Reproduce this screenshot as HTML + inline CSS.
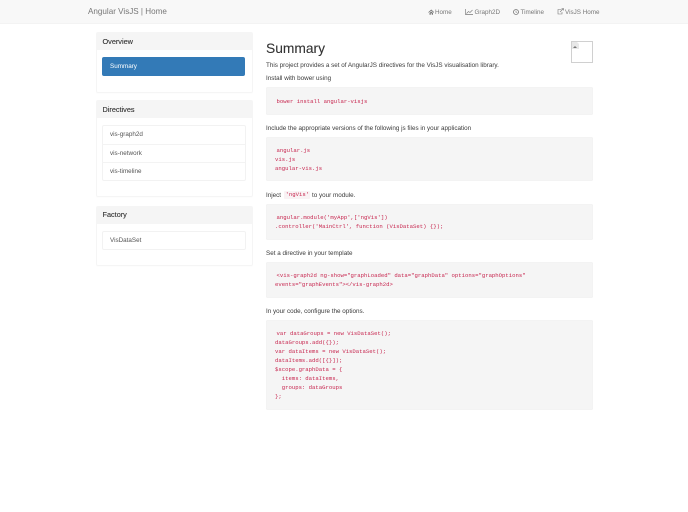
<!DOCTYPE html>
<html><head><meta charset="utf-8"><title>Angular VisJS</title>
<style>
html,body{margin:0;padding:0;background:#fff}
#r{position:relative;width:688px;height:512px;overflow:hidden;font-family:"Liberation Sans",sans-serif;color:#3a3a3a;font-size:6.3px;filter:blur(.28px)}
#r div,#r svg{position:absolute}
.t{white-space:pre;line-height:10px;height:10px}
.n{color:#777;font-size:6.3px;top:7.500px}
.p{left:96px;width:155px;background:#fff;border:1px solid #f5f5f5;border-radius:2px;box-shadow:0 1px 1px rgba(0,0,0,.012);box-sizing:content-box}
.h{background:#f5f5f5}
.l{left:102px;width:142px;background:#fff;border:1px solid #f2f2f2;border-radius:2px;box-sizing:content-box}
.s{left:102px;width:143px;height:1px;background:#f3f3f3}
.b{font-size:7.3px;left:102.5px;color:#333;-webkit-text-stroke:.12px #333}
.pre{left:266px;width:326.5px;background:#f5f5f5;border-radius:2px;box-shadow:inset 0 0 0 .5px #f1f1f1}
.c{font-family:"Liberation Mono",monospace;font-size:5.62px;color:#c7254e;white-space:pre;line-height:9px;height:9px}
</style></head><body><div id="r">
<div style="left:0;top:0;width:688px;height:23px;background:#f8f8f8;border-bottom:1px solid #f3f3f3"></div>
<div class="t" style="left:88px;top:7px;font-size:8.1px;color:#777">Angular VisJS | Home</div>

<svg style="left:427.500px;top:8.500px" width="6.500" height="6" viewBox="0 0 12 12"><path d="M0 6.500 6 1l6 5.500-1 1L6 3.500 1 7.500zM2.500 8 6 5l3.500 3v3.500H7V8.500H5v3H2.500z" fill="#777"/></svg>
<div class="t n" style="left:435px">Home</div>
<svg style="left:465px;top:8.500px" width="8" height="6" viewBox="0 0 16 12"><path d="M1 0v11h15M3 9l4-4 3 2 5-5" fill="none" stroke="#777" stroke-width="1.300"/></svg>
<div class="t n" style="left:474.500px">Graph2D</div>
<svg style="left:513px;top:8.500px" width="6" height="6" viewBox="0 0 12 12"><circle cx="6" cy="6" r="5" fill="none" stroke="#777" stroke-width="1.600"/><path d="M6 3v3.500h2.500" fill="none" stroke="#777" stroke-width="1.200"/></svg>
<div class="t n" style="left:520.500px">Timeline</div>
<svg style="left:557px;top:8px" width="7" height="7" viewBox="0 0 14 14"><path d="M9 3H2v9h8V8M6 8l7-7M9 1h4v4" fill="none" stroke="#777" stroke-width="1.200"/></svg>
<div class="t n" style="left:565px">VisJS Home</div>

<div class="p" style="top:32px;height:58.500px"></div>
<div class="h" style="left:96.500px;top:32.500px;width:155.500px;height:17.500px"></div>
<div class="t b" style="top:36.500px">Overview</div>
<div style="left:102px;top:57px;width:143px;height:18.500px;background:#337ab7;border-radius:2px"></div>
<div class="t" style="left:110px;top:62px;color:#fff">Summary</div>

<div class="p" style="top:100px;height:95px"></div>
<div class="h" style="left:96.500px;top:100.500px;width:155.500px;height:17.500px"></div>
<div class="t b" style="top:104.500px">Directives</div>
<div class="l" style="top:125px;height:54px"></div>
<div class="s" style="top:143.500px"></div>
<div class="s" style="top:162px"></div>
<div class="t" style="left:110px;top:130px;color:#555">vis-graph2d</div>
<div class="t" style="left:110px;top:148.500px;color:#555">vis-network</div>
<div class="t" style="left:110px;top:167px;color:#555">vis-timeline</div>

<div class="p" style="top:206px;height:57.500px"></div>
<div class="h" style="left:96.500px;top:206.500px;width:155.500px;height:17.500px"></div>
<div class="t b" style="top:209.500px">Factory</div>
<div class="l" style="top:231px;height:16.500px"></div>
<div class="t" style="left:110px;top:236px;color:#555">VisDataSet</div>

<div class="t" style="left:266px;top:44px;font-size:13.800px;color:#333;-webkit-text-stroke:.1px #333">Summary</div>
<div style="left:571px;top:41px;width:20px;height:20px;border:1px solid #d0d0d0"></div>
<svg style="left:572px;top:42px" width="8" height="8" viewBox="0 0 8 8"><path d="M0 0h5l2 2v5H0z" fill="#e8e8e8"/><path d="M1 6l2-2 2 2z" fill="#777"/></svg>

<div class="t" style="left:266px;top:60.500px">This project provides a set of AngularJS directives for the VisJS visualisation library.</div>
<div class="t" style="left:266px;top:74px">Install with bower using</div>
<div class="pre" style="top:87px;height:28px"></div>
<div class="c" style="left:276.500px;top:97px">bower install angular-visjs</div>

<div class="t" style="left:266px;top:123.500px">Include the appropriate versions of the following js files in your application</div>
<div class="pre" style="top:137px;height:44px"></div>
<div class="c" style="left:276.500px;top:146px">angular.js</div>
<div class="c" style="left:275px;top:155px">vis.js</div>
<div class="c" style="left:275px;top:164px">angular-vis.js</div>

<div class="t" style="left:266px;top:190.500px">Inject</div>
<div style="left:284px;top:190.500px;width:26px;height:8.500px;background:#f9f2f4;border-radius:1px"></div>
<div class="c" style="left:285.500px;top:190px">'ngVis'</div>
<div class="t" style="left:312px;top:190.500px">to your module.</div>
<div class="pre" style="top:204px;height:36px"></div>
<div class="c" style="left:276.500px;top:213px">angular.module('myApp',['ngVis'])</div>
<div class="c" style="left:275px;top:222px">.controller('MainCtrl', function (VisDataSet) {});</div>

<div class="t" style="left:266px;top:249px">Set a directive in your template</div>
<div class="pre" style="top:262px;height:35.500px"></div>
<div class="c" style="left:276.500px;top:271px">&lt;vis-graph2d ng-show="graphLoaded" data="graphData" options="graphOptions"</div>
<div class="c" style="left:275px;top:280px">events="graphEvents"&gt;&lt;/vis-graph2d&gt;</div>

<div class="t" style="left:266px;top:307px">In your code, configure the options.</div>
<div class="pre" style="top:320px;height:90px"></div>
<div class="c" style="left:276.500px;top:329px">var dataGroups = new VisDataSet();</div>
<div class="c" style="left:275px;top:338px">dataGroups.add({});</div>
<div class="c" style="left:275px;top:347px">var dataItems = new VisDataSet();</div>
<div class="c" style="left:275px;top:356px">dataItems.add([{}]);</div>
<div class="c" style="left:275px;top:365px">$scope.graphData = {</div>
<div class="c" style="left:275px;top:374px">  items: dataItems,</div>
<div class="c" style="left:275px;top:383px">  groups: dataGroups</div>
<div class="c" style="left:275px;top:392px">};</div>
</div></body></html>
